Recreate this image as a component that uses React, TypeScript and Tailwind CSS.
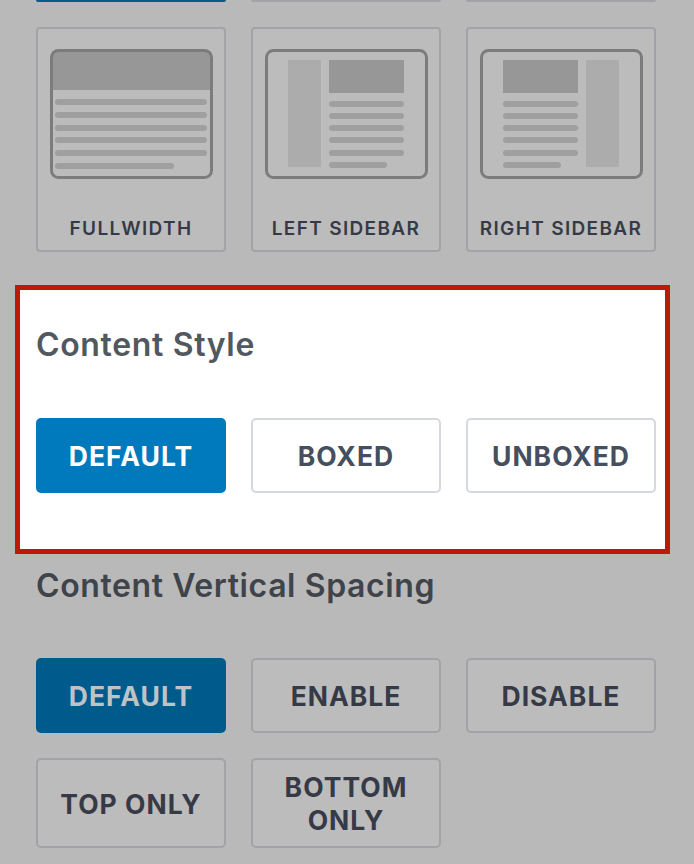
const FONT = "font-['Inter','Noto_Sans',sans-serif]";

function Line({ x, y, w }: { x: number; y: number; w: number }) {
  return <rect x={x} y={y} width={w} height={6} rx={3} fill="#9f9f9f" />;
}

function Frame({ children }: { children: React.ReactNode }) {
  return (
    <svg width="163" height="130" viewBox="0 0 163 130" className="block">
      {children}
      <rect x="1.5" y="1.5" width="160" height="127" rx="7" fill="none" stroke="#7c7c7c" strokeWidth="3" />
    </svg>
  );
}

function FullWidthIcon() {
  return (
    <Frame>
      <rect x="2" y="2" width="159" height="39" fill="#979797" />
      <Line x={5} y={50} w={152} />
      <Line x={5} y={63} w={152} />
      <Line x={5} y={76} w={152} />
      <Line x={5} y={88} w={152} />
      <Line x={5} y={101} w={152} />
      <Line x={5} y={114} w={119} />
    </Frame>
  );
}

function SidebarIcon({ side }: { side: "left" | "right" }) {
  const barX = side === "left" ? 23 : 106;
  const mainX = side === "left" ? 64 : 23;
  return (
    <Frame>
      <rect x={barX} y="11" width="33" height="107" fill="#acacac" />
      <rect x={mainX} y="11" width="75" height="33" fill="#979797" />
      <Line x={mainX} y={52} w={75} />
      <Line x={mainX} y={64} w={75} />
      <Line x={mainX} y={76} w={75} />
      <Line x={mainX} y={88} w={75} />
      <Line x={mainX} y={101} w={75} />
      <Line x={mainX} y={113} w={58} />
    </Frame>
  );
}

function LayoutCard({ label, icon }: { label: string; icon: React.ReactNode }) {
  return (
    <div className="h-[225px] border-2 border-[#a1a3a6] rounded-[4px] bg-[#bcbcbc] flex flex-col items-center pt-[20px]">
      {icon}
      <span className="mt-[38px] text-[19px] leading-[24px] font-semibold tracking-[1.35px] text-[#363a47] whitespace-nowrap">
        {label}
      </span>
    </div>
  );
}

function OptionButton({
  label,
  active,
  light,
  tall,
}: {
  label: string;
  active?: boolean;
  light?: boolean;
  tall?: boolean;
}) {
  let color = "border-2 border-[#a1a3a6] bg-[#bcbcbc] text-[#363a47]";
  if (light) color = "border-2 border-[#d5d8dc] bg-white text-[#454f5e]";
  if (active) color = light ? "bg-[#0079bd] text-white" : "bg-[#005b8d] text-[#bcc4c9]";

  return (
    <div
      className={`${tall ? "h-[90px]" : "h-[75px]"} ${color} rounded-[5px] flex items-center justify-center text-center pt-[2px] text-[26.5px] leading-[33px] font-bold tracking-[1px]`}
    >
      {label}
    </div>
  );
}

export default function App() {
  return (
    <div className={`${FONT} w-[694px] h-[864px] overflow-hidden bg-[#b9b9b9]`}>
      <div className="pl-[36px] pr-[38px]">
        <div className="grid grid-cols-3 gap-x-[25px]">
          <div className="h-[2px] bg-[#005b8d] rounded-b-[4px]" />
          <div className="h-[2px] bg-[#a1a3a6] rounded-b-[4px]" />
          <div className="h-[2px] bg-[#a1a3a6] rounded-b-[4px]" />
        </div>
        <div className="mt-[25px] grid grid-cols-3 gap-x-[25px]">
          <LayoutCard label="FULLWIDTH" icon={<FullWidthIcon />} />
          <LayoutCard label="LEFT SIDEBAR" icon={<SidebarIcon side="left" />} />
          <LayoutCard label="RIGHT SIDEBAR" icon={<SidebarIcon side="right" />} />
        </div>
      </div>

      <div className="mt-[33px] mx-[15px] w-[655px] h-[269px] border-[5px] border-[#b81d02] bg-white pl-[16px] pr-[9px] box-border">
        <h2 className="mt-[35px] text-[32px] leading-[40px] font-semibold tracking-[0.65px] text-[#51585f]">
          Content Style
        </h2>
        <div className="mt-[53px] grid grid-cols-3 gap-x-[25px]">
          <OptionButton label="DEFAULT" active light />
          <OptionButton label="BOXED" light />
          <OptionButton label="UNBOXED" light />
        </div>
      </div>

      <div className="pl-[36px] pr-[38px]">
        <h2 className="mt-[12px] text-[32px] leading-[40px] font-semibold tracking-[0.6px] text-[#3f444b]">
          Content Vertical Spacing
        </h2>
        <div className="mt-[52px] grid grid-cols-3 gap-x-[25px] gap-y-[25px]">
          <OptionButton label="DEFAULT" active />
          <OptionButton label="ENABLE" />
          <OptionButton label="DISABLE" />
          <OptionButton label="TOP ONLY" tall />
          <OptionButton label="BOTTOM ONLY" tall />
        </div>
      </div>
    </div>
  );
}
